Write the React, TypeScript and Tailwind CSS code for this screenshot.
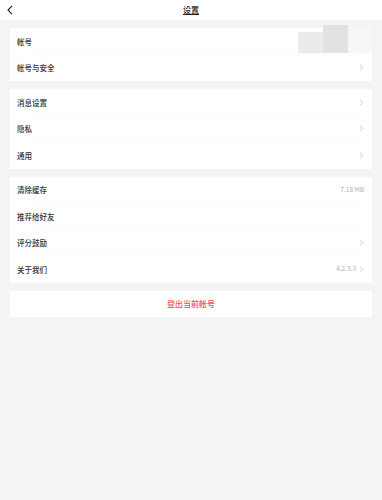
import React from "react";

const Chevron = () => (
  <svg width="5" height="7" viewBox="0 0 5 7" className="ml-[3px]">
    <path d="M1 0.8 L4 3.5 L1 6.2" fill="none" stroke="#c4c4c4" strokeWidth="0.8" />
  </svg>
);

type RowProps = { label: string; value?: string; arrow?: boolean; line?: boolean; children?: React.ReactNode };

const Row = ({ label, value, arrow, line, children }: RowProps) => (
  <div className="relative flex h-[26.5px] items-center pl-[7px] pr-[8px]">
    <span className="text-[7.5px] font-medium text-[#333]">{label}</span>
    <div className="ml-auto flex items-center">
      {value && <span className="text-[6.5px] text-[#b0b0b0]">{value}</span>}
      {arrow && <Chevron />}
    </div>
    {children}
    {line && <div className="absolute bottom-0 left-[20px] right-[8px] h-px bg-[#fbfbfb]" />}
  </div>
);

export default function App() {
  return (
    <div
      className="flex h-[500px] w-[382px] flex-col bg-[#f4f4f4]"
      style={{ fontFamily: '"Noto Sans CJK SC", "Noto Sans", sans-serif' }}
    >
      <div className="relative flex h-[20px] items-center justify-center bg-white">
        <svg width="8" height="10" viewBox="0 0 8 10" className="absolute left-[6px] top-[5px]">
          <path d="M6 0.8 L2 5 L6 9.2" fill="none" stroke="#222" strokeWidth="1.1" />
        </svg>
        <span className="text-[8px] font-medium text-[#222] underline underline-offset-[1px]">设置</span>
      </div>
      <div className="flex flex-col gap-[8px] px-[10px] pt-[8px]">
        <div className="relative bg-white">
          <Row label="帐号" line>
            <div className="absolute right-0 top-[-3px] flex h-[28px] items-end">
              <div className="h-[21px] w-[25px] bg-[#ebebee]" />
              <div className="h-[28px] w-[25px] bg-[#e3e2e1]" />
              <div className="h-[25px] w-[24px] bg-[#f7f7f7]" />
            </div>
          </Row>
          <Row label="帐号与安全" arrow />
        </div>
        <div className="bg-white">
          <Row label="消息设置" arrow line />
          <Row label="隐私" arrow line />
          <Row label="通用" arrow />
        </div>
        <div className="bg-white">
          <Row label="清除缓存" value="7.18 MB" line />
          <Row label="推荐给好友" line />
          <Row label="评分鼓励" arrow line />
          <Row label="关于我们" value="4.2.3.3" arrow />
        </div>
        <div className="flex h-[26.5px] items-center justify-center bg-white">
          <span className="text-[8px] font-medium text-[#ef4a64]">登出当前帐号</span>
        </div>
      </div>
    </div>
  );
}
